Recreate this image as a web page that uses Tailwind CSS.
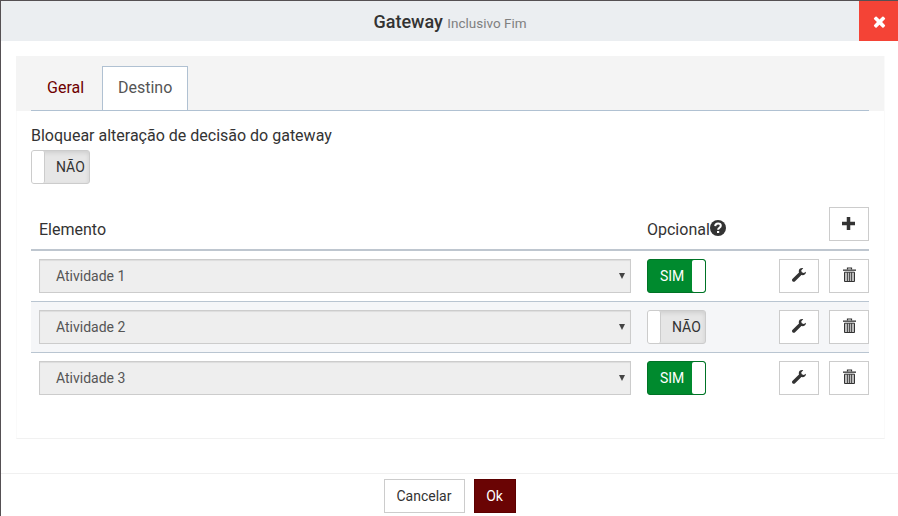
<!DOCTYPE html>
<html lang="pt-BR">
<head>
<meta charset="utf-8">
<title>Gateway</title>
<script src="https://cdn.jsdelivr.net/npm/@tailwindcss/browser@4"></script>
</head>
<body class="h-[516px] w-[898px] overflow-hidden border-t border-l border-[#555053] bg-white font-['Roboto',sans-serif] text-[16px] leading-[22px] text-[#333]">
<svg class="hidden">
  <symbol id="wrench" viewBox="0 0 14 14"><path d="M11.2.2C8.7-.4 6.5 1.2 6.8 3.6c0 .3.1.6.2.9L.6 10.700c-.8.8-.8 1.8-.1 2.6.8.8 1.8.7 2.6-.1l6.3-6.1c2.4.6 4.600-.7 4.600-3.400l-2.200 1.200-2-.6-.6-1.700z"/></symbol>
  <symbol id="trash" viewBox="0 0 13 16"><path d="M4.500 2.500v-1.500h4v1.500" fill="none" stroke="currentColor" stroke-width="1.200"/><path d="M0 2.500h13v1.300H0z" fill="currentColor"/><path d="M1.500 5.200h10v9.300h-10z" fill="#bbb" stroke="currentColor"/><path d="M4.500 5v9M6.500 5v9M8.500 5v9" stroke="#444" stroke-width=".9"/></symbol>
</svg>
<div class="flex h-full flex-col">
  <header class="flex h-10 shrink-0 bg-[#ebeef1]">
    <h4 class="flex-1 pl-[40px] text-center text-[18px] leading-[41px] font-medium">Gateway <small class="text-[13.5px] font-normal text-[#808080]">Inclusivo Fim</small></h4>
    <button class="flex w-[39px] items-center justify-center bg-[#f44336] pl-[2px] text-white"><svg class="h-[17px] w-[17px]" viewBox="0 0 1792 1792" fill="currentColor"><path d="M1490 1322q0 40-28 68l-136 136q-28 28-68 28t-68-28l-294-294-294 294q-28 28-68 28t-68-28l-136-136q-28-28-28-68t28-68l294-294-294-294q-28-28-28-68t28-68l136-136q28-28 68-28t68 28l294 294 294-294q28-28 68-28t68 28l136 136q28 28 28 68t-28 68l-294 294 294 294q28 28 28 68z"/></svg></button>
  </header>
  <main class="h-[432px] shrink-0 px-[15px] pt-[15px] pr-[12px]">
    <section class="h-[383px] w-[869px] border-x border-b border-x-[#fafafa] border-b-[#f1f1f1]">
      <div class="-ml-px h-[55px] bg-[#f4f4f4] px-[15px] pt-[10px]">
        <nav class="flex h-[45px] border-b border-[#b0c1d2]">
          <span class="w-[71px] pt-[11px] pl-4 text-[#6f0000]">Geral</span>
          <span class="h-[44px] w-[86px] border border-b-0 border-[#b0c1d2] bg-white pt-[10px] pl-[15px] text-[#555]">Destino</span>
        </nav>
      </div>
      <div class="pt-[14px] pr-[15px] pl-[14px]">
        <p>Bloquear alteração de decisão do gateway</p>
        <div class="mt-[3px] flex h-[34px] w-[59px] overflow-hidden rounded-[3px] border border-[#ccc] bg-[#e6e6e6] text-[14px] shadow-[inset_0_2px_4px_rgba(0,0,0,0.1)]"><i class="w-[13px] rounded-r-[2px] border-r border-[#ccc] bg-white"></i><span class="flex-1 pt-[5px] pl-[11px]">NÃO</span></div>
        <div class="mt-[15px] flex h-[52px] border-b-2 border-[#bec6cf] pt-2">
          <span class="w-[608px] pt-[12px] pl-2">Elemento</span>
          <span class="flex w-[190px] pt-[12px] pl-2">Opcional<svg class="mt-px h-4 w-4" viewBox="0 0 16 16"><circle cx="8" cy="8" r="8" fill="#333"/><path d="M5.2 6.1C5.3 2.5 10.8 2.8 10.8 5.8c0 2-2.7 1.9-2.7 4" fill="none" stroke="#fff" stroke-width="2"/><path d="M7 11h2.2v2H7z" fill="#fff"/></svg></span>
          <button class="flex h-[34px] w-10 justify-center border border-[#ccc] bg-white pt-[9px] pr-px"><svg class="h-[13px] w-[13px]" viewBox="0 0 13 13"><path d="M6.5 0v13M0 6.5h13" stroke="#333" stroke-width="3.5"/></svg></button>
        </div>
        <div class="flex h-[50px] pt-2 pl-2 text-[14px]">
          <div class="flex h-[34px] w-[592px] justify-between border border-[#ccc] bg-[#eee] pt-[5px] pr-[4px] pl-4 text-[#555] shadow-[inset_0_1px_1px_rgba(0,0,0,0.075)]">Atividade 1<svg class="mt-[8px] h-[6px] w-[8px]" viewBox="0 0 8 6"><path d="M1 0h6L4 6z" fill="#444"/></svg></div>
          <div class="ml-4 flex h-[34px] w-[59px] overflow-hidden rounded-[3px] border border-[#007326] bg-[#008a2e] text-white"><span class="flex-1 pt-[5px] pl-[12px]">SIM</span><i class="w-[13px] rounded-[2px] bg-white"></i></div>
          <button class="ml-[73px] flex h-[34px] w-10 justify-center border border-[#ccc] bg-white pt-[8px]"><svg class="h-[14px] w-[14px]" fill="#333"><use href="#wrench"/></svg></button>
          <button class="ml-[10px] flex h-[34px] w-10 shrink-0 justify-center border border-[#ccc] bg-white pt-[7px] pl-px"><svg class="h-4 w-[13px]"><use href="#trash"/></svg></button>
        </div>
        <div class="flex h-[51px] border-t border-[#b9c5d1] bg-[#f5f6f8] pt-2 pl-2 text-[14px]">
          <div class="flex h-[34px] w-[592px] justify-between border border-[#ccc] bg-[#eee] pt-[5px] pr-[4px] pl-4 text-[#555] shadow-[inset_0_1px_1px_rgba(0,0,0,0.075)]">Atividade 2<svg class="mt-[8px] h-[6px] w-[8px]" viewBox="0 0 8 6"><path d="M1 0h6L4 6z" fill="#444"/></svg></div>
          <div class="ml-4 flex h-[34px] w-[59px] overflow-hidden rounded-[3px] border border-[#ccc] bg-[#e6e6e6] shadow-[inset_0_2px_4px_rgba(0,0,0,0.1)]"><i class="w-[13px] rounded-r-[2px] border-r border-[#ccc] bg-white"></i><span class="flex-1 pt-[5px] pl-[11px]">NÃO</span></div>
          <button class="ml-[73px] flex h-[34px] w-10 justify-center border border-[#ccc] bg-white pt-[8px]"><svg class="h-[14px] w-[14px]" fill="#333"><use href="#wrench"/></svg></button>
          <button class="ml-[10px] flex h-[34px] w-10 shrink-0 justify-center border border-[#ccc] bg-white pt-[7px] pl-px"><svg class="h-4 w-[13px]"><use href="#trash"/></svg></button>
        </div>
        <div class="flex h-[51px] border-t border-[#b9c5d1] pt-2 pl-2 text-[14px]">
          <div class="flex h-[34px] w-[592px] justify-between border border-[#ccc] bg-[#eee] pt-[5px] pr-[4px] pl-4 text-[#555] shadow-[inset_0_1px_1px_rgba(0,0,0,0.075)]">Atividade 3<svg class="mt-[8px] h-[6px] w-[8px]" viewBox="0 0 8 6"><path d="M1 0h6L4 6z" fill="#444"/></svg></div>
          <div class="ml-4 flex h-[34px] w-[59px] overflow-hidden rounded-[3px] border border-[#007326] bg-[#008a2e] text-white"><span class="flex-1 pt-[5px] pl-[12px]">SIM</span><i class="w-[13px] rounded-[2px] bg-white"></i></div>
          <button class="ml-[73px] flex h-[34px] w-10 justify-center border border-[#ccc] bg-white pt-[8px]"><svg class="h-[14px] w-[14px]" fill="#333"><use href="#wrench"/></svg></button>
          <button class="ml-[10px] flex h-[34px] w-10 shrink-0 justify-center border border-[#ccc] bg-white pt-[7px] pl-px"><svg class="h-4 w-[13px]"><use href="#trash"/></svg></button>
        </div>
      </div>
    </section>
  </main>
  <footer class="flex flex-1 justify-center gap-[9px] border-t border-[#f0f0f0] pt-[5px] text-[14px]">
    <button class="h-[34px] w-[81px] border border-[#ccc] bg-white">Cancelar</button>
    <button class="h-[34px] w-[42px] border border-[#5c0000] bg-[#6a0404] text-white">Ok</button>
  </footer>
</div>
</body>
</html>
